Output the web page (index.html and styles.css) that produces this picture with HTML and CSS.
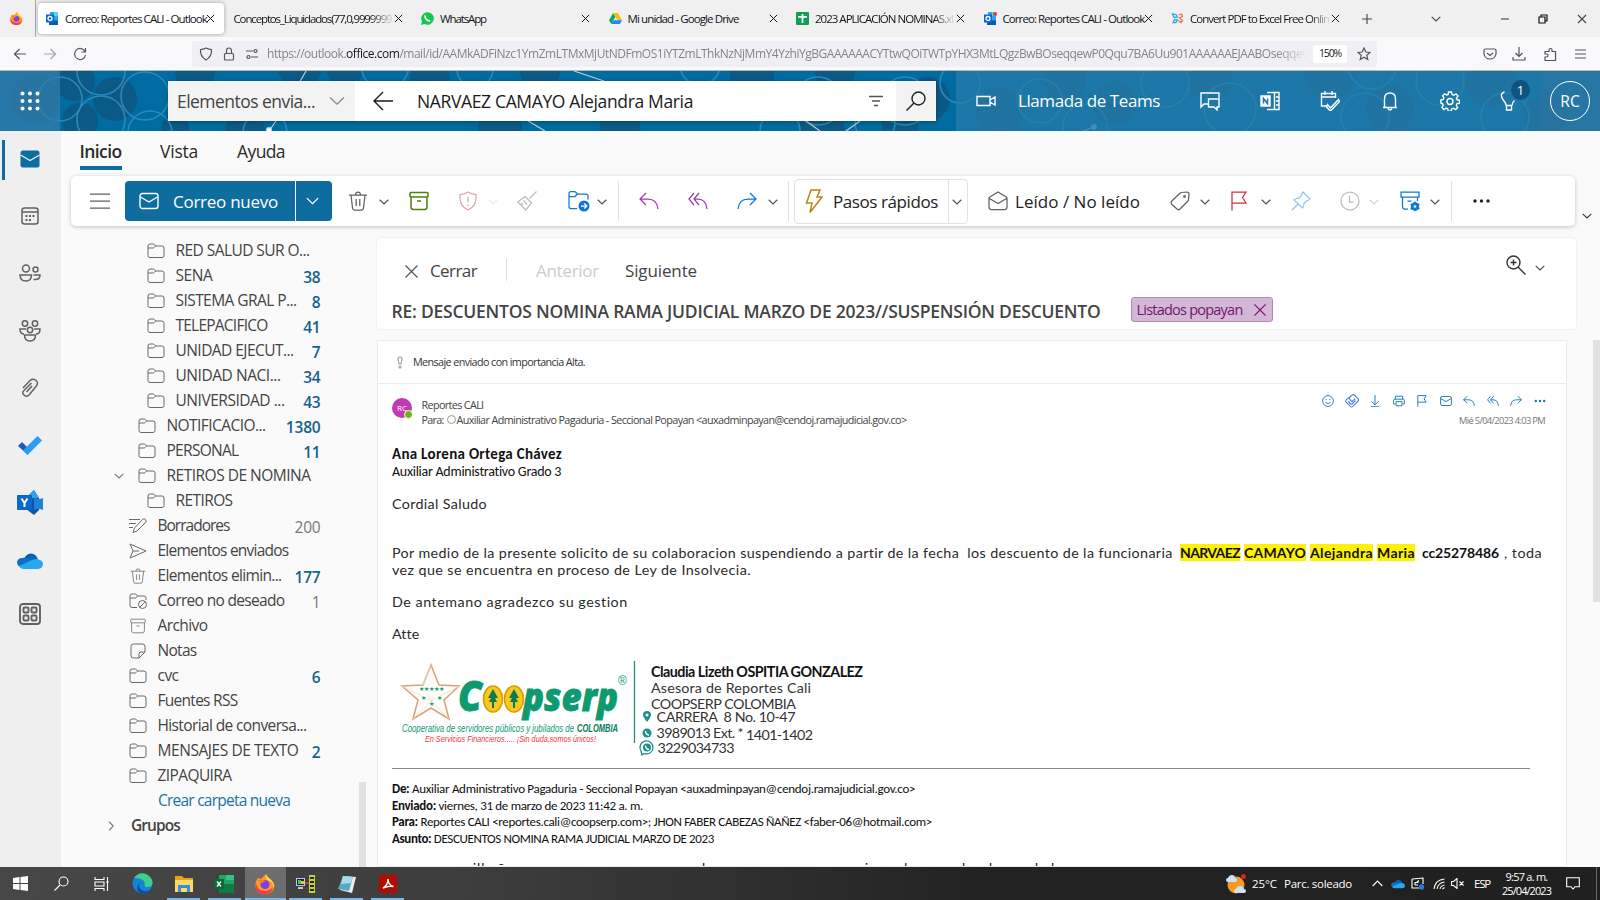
FILE: index.html
```html
<!DOCTYPE html>
<html lang="es">
<head>
<meta charset="utf-8">
<title>Correo: Reportes CALI - Outlook</title>
<link rel="stylesheet" href="styles.css">
</head>
<body>
<svg class="defs" width="0" height="0">
  <symbol id="x" viewBox="0 0 10 10"><path d="M1 1l8 8M9 1l-8 8"/></symbol>
  <symbol id="down" viewBox="0 0 10 6"><path d="M.7.8L5 5 9.300.8"/></symbol>
  <symbol id="folder" viewBox="0 0 18 16"><path d="M1 12.500V3Q1 1 3 1h3.200q.8 0 1.300.6L8.700 3H15q2 0 2 2v7.500q0 2-2 2H3q-2 0-2-2zM1 5h5q.8 0 1.300-.6L8.700 3"/></symbol>
  <symbol id="trash" viewBox="0 0 20 20"><path d="M1 4h18M7.500 4Q7.500 1 10 1t2.500 3M3 4l1.500 13q.2 2 2 2h7q1.800 0 2-2L17 4M8.200 8v7M11.800 8v7"/></symbol>
  <symbol id="archive" viewBox="0 0 20 20"><path d="M2 1.500h16q1 0 1 1V5q0 1-1 1H2q-1 0-1-1V2.500q0-1 1-1zM2 6v10q0 2.500 2.500 2.500h11Q18 18.500 18 16V6M8 10h4"/></symbol>
  <symbol id="reply" viewBox="0 0 20 20"><path d="M7 2L1 8l6 6M1 8h8q9 0 10 10"/></symbol>
  <symbol id="replyall" viewBox="0 0 20 20"><path d="M6 2L1 8l5 6M11 2L6 8l5 6M6 8h4q8 0 9 10"/></symbol>
  <symbol id="mail" viewBox="0 0 20 18"><rect x="1" y="1.500" width="18" height="15" rx="2.500"/><path d="M1.500 5L10 10l8.500-5"/></symbol>
  <symbol id="flag" viewBox="0 0 18 20"><path d="M2 19.500V1h14l-3.500 5.500L16 12H2"/></symbol>
  <symbol id="cloud" viewBox="0 0 26 16"><path fill="#0364b8" stroke="none" d="M7 7Q8 1 14 .5q5 .2 7 6L14 12z"/><path fill="#1070c8" stroke="none" d="M5 5q5-1 8 2l8 7H4q-4-1-4-5 1-4 5-4z"/><path fill="#28a8ea" stroke="none" d="M2 13L15 7q4-2 7-.3 4 .8 4 4.800-.5 4-5 4.500H6q-3-.5-4-3z"/></symbol>
  <symbol id="outlook" viewBox="0 0 13 13"><path fill="#28a8ea" stroke="none" d="M4 0h8v12H4z"/><path fill="#50d9ff" stroke="none" d="M8 0h4v4H8z"/><path fill="#0f5ba8" stroke="none" d="M3 8l9 .500V13H3z"/><path fill="#0a68c8" stroke="none" d="M0 2.500h8v8H0z"/><circle cx="4" cy="6.500" r="2" stroke="#fff" stroke-width="1.300"/></symbol>
  <symbol id="fox" viewBox="0 0 20 20"><path fill="#ff9a1f" stroke="none" d="M3 4l3 1q3-3 5-5 1 3 4 5 5 4 4 9-2 6-9 6-8 0-9.500-7Q0 7 3 4z"/><path fill="#ffde3a" stroke="none" d="M11 0q1 3 4 5 5 4 4 9-1-6-5-7-4-2-3-7z"/><path fill="#f6384d" stroke="none" d="M1 9q1 8 9 8 5 0 8-4-1 7-8 7-8 0-9.500-7z"/><circle cx="10" cy="10.500" r="4.500" fill="#7b3ff2" stroke="none"/><path fill="#ff7a22" stroke="none" d="M3 6q4-1 8 1-3 .5-3 2-2 0-3-1z"/></symbol>
  <symbol id="drive" viewBox="0 0 14 12"><path fill="#0da960" stroke="none" d="M4.500 0L0 8l2.300 4L7 4z"/><path fill="#fbbc04" stroke="none" d="M4.500 0h5L14 8H9.300z"/><path fill="#2684fc" stroke="none" d="M2.300 12L4.700 8H14l-2.300 4z"/></symbol>
</svg>

<div class="tabs">
  <div class="pin"><svg class="i13"><use href="#fox"/></svg></div>
  <div class="tab on"><svg class="i13"><use href="#outlook"/></svg><span data-fit="142">Correo: Reportes CALI - Outlook</span><svg class="cl"><use href="#x"/></svg></div>
  <div class="tab bare fade"><span data-fit="158">Conceptos_Liquidados(77,0,9999999</span><svg class="cl"><use href="#x"/></svg></div>
  <div class="tab"><svg class="i13" viewBox="0 0 13 13"><path fill="#12c84c" stroke="none" d="M0 13l1-3.500A6.300 6.300 0 1 1 3.500 12z"/><path d="M4 3.500q0 5 5.300 5.500" stroke="#fff" stroke-width="1.800"/></svg><span data-fit="46">WhatsApp</span><svg class="cl"><use href="#x"/></svg></div>
  <div class="tab"><svg class="i13"><use href="#drive"/></svg><span data-fit="111">Mi unidad - Google Drive</span><svg class="cl"><use href="#x"/></svg></div>
  <div class="tab fade"><svg class="i13" viewBox="0 0 13 13"><rect width="13" height="13" rx="1" fill="#0f9d58" stroke="none"/><path d="M6.500 2v9M2 4.800h9" stroke="#fff" stroke-width="1.800"/></svg><span data-fit="138">2023 APLICACIÓN NOMINAS.xl</span><svg class="cl"><use href="#x"/></svg></div>
  <div class="tab"><svg class="i13" viewBox="0 0 13 13"><use href="#outlook"/><circle cx="11" cy="2" r="2" fill="#e23b3b" stroke="none"/></svg><span data-fit="142">Correo: Reportes CALI - Outlook</span><svg class="cl"><use href="#x"/></svg></div>
  <div class="tab fade"><svg class="i13" viewBox="0 0 13 13"><path d="M1.500 2l3.500.5L6.500 5 3 5.500zM2 10.500l1.500-3 3 .5-1.500 2.500z" stroke="#35a8ea" stroke-width="1.300"/><path d="M7.500 3l3-1 1 2.500-3 1.500 3 2.500-1.500 2-2.500-2" stroke="#f2703a" stroke-width="1.300"/></svg><span data-fit="139">Convert PDF to Excel Free Onlin</span><svg class="cl"><use href="#x"/></svg></div>
  <div class="win">
    <svg class="i10" viewBox="0 0 10 10"><path d="M5 0v10M0 5h10"/></svg>
    <svg class="chev"><use href="#down"/></svg>
    <svg class="i10" viewBox="0 0 10 10"><path d="M1 5h8"/></svg>
    <svg class="i10" viewBox="0 0 10 10"><path d="M1 3h6v6H1zM3 3V1h6v6H7" stroke="#111" stroke-width="1.200"/></svg>
    <svg class="i10"><use href="#x"/></svg>
  </div>
</div>

<div class="nav">
  <svg class="i14" viewBox="0 0 14 14"><path d="M13 7H1.500M6.500 2l-5 5 5 5"/></svg>
  <svg class="i14 dim" viewBox="0 0 14 14"><path d="M1 7h11.500M7.500 2l5 5-5 5"/></svg>
  <svg class="i14" viewBox="0 0 14 14"><path d="M12 4.500A5.500 5.500 0 1 0 12.500 8M12.500 1v4H8.500"/></svg>
  <div class="url">
    <svg class="i14" viewBox="0 0 14 14"><path d="M7 1q3 1.500 5.500 1.500Q13 9.500 7 13 1 9.500 1.500 2.500 4 2.500 7 1z"/></svg>
    <svg class="i14" viewBox="0 0 14 14"><rect x="2.500" y="6.500" width="9" height="6.500" rx="1"/><path d="M4.500 6.500V4q0-3 2.500-3t2.500 3v2.500"/></svg>
    <svg class="i14" viewBox="0 0 14 14"><path d="M1 4h7M6 10h7"/><circle cx="10.500" cy="4" r="1.500"/><circle cx="3.500" cy="10" r="1.500"/></svg>
    <div class="addr"><span data-fit="1044">https://outlook.<b>office.com</b>/mail/id/AAMkADFiNzc1YmZmLTMxMjUtNDFmOS1iYTZmLThkNzNjMmY4YzhiYgBGAAAAAACYTtwQOiTWTpYHX3MtLQgzBwBOseqqewP0Qqu7BA6Uu901AAAAAAEJAABOseqqew</span></div>
    <div class="zoom"><span data-fit="22">150%</span></div>
    <svg class="i14" viewBox="0 0 14 14"><path d="M7 1l1.800 4 4.200.4-3.200 2.900 1 4.200L7 10.300l-3.800 2.200 1-4.200L1 5.400 5.200 5z"/></svg>
  </div>
  <svg class="i14" viewBox="0 0 14 14"><path d="M2.500 2h9q1.500 0 1.500 1.500V7q-1 5-6 5T1 7V3.500Q1 2 2.500 2zM4 6l3 2.500L10 6"/></svg>
  <svg class="i14" viewBox="0 0 14 14"><path d="M7 0v9M3.500 6L7 9.500 10.500 6M1 10v3h12v-3"/></svg>
  <svg class="i14" viewBox="0 0 14 14"><path d="M2 13.500V10h1.500q1.500 0 1.500-1.500T3.500 7H2V4.500h4V3q0-1.500 1.500-1.500T9 3v1.500h3.500v9z"/></svg>
  <svg class="i14" viewBox="0 0 14 14"><path d="M2 3h11M2 7h11M2 11h11"/></svg>
</div>

<header class="top">
  <svg class="pattern" width="1600" height="60" viewBox="0 0 1600 60">
    <g fill="#0b5a85" stroke="none">
      <circle cx="35" cy="28" r="24"/><circle cx="75" cy="10" r="20"/><circle cx="115" cy="28" r="22"/><circle cx="80" cy="50" r="18"/><circle cx="175" cy="57" r="14"/><circle cx="195" cy="0" r="20"/><circle cx="300" cy="-4" r="22"/><circle cx="245" cy="60" r="20"/><circle cx="345" cy="-2" r="18"/><circle cx="430" cy="8" r="20"/><circle cx="500" cy="56" r="22"/><circle cx="540" cy="0" r="20"/><circle cx="620" cy="55" r="20"/><circle cx="752" cy="5" r="22"/><circle cx="835" cy="0" r="20"/><circle cx="822" cy="56" r="22"/><circle cx="900" cy="54" r="18"/><circle cx="928" cy="28" r="22"/><circle cx="1000" cy="40" r="24"/><circle cx="1065" cy="8" r="22"/><circle cx="1115" cy="32" r="22"/><circle cx="1210" cy="8" r="22"/><circle cx="1330" cy="2" r="26"/><circle cx="1390" cy="38" r="24"/><circle cx="1490" cy="10" r="26"/><circle cx="1545" cy="45" r="22"/>
    </g>
    <g stroke="#2c88ba" stroke-width="1.600">
      <circle cx="60" cy="28" r="22"/><circle cx="101" cy="0" r="24"/><circle cx="101" cy="49" r="24"/><circle cx="145" cy="25" r="24"/><circle cx="150" cy="62" r="22"/><circle cx="265" cy="62" r="22"/><circle cx="385" cy="-6" r="24"/><circle cx="475" cy="-2" r="18"/><circle cx="700" cy="-6" r="20"/><circle cx="780" cy="60" r="20"/><circle cx="818" cy="30" r="24"/><circle cx="875" cy="52" r="20"/><circle cx="905" cy="30" r="24"/><circle cx="960" cy="12" r="20"/><circle cx="1040" cy="30" r="22"/><circle cx="1085" cy="55" r="22"/><circle cx="1165" cy="12" r="24"/><circle cx="1230" cy="38" r="26"/><circle cx="1372" cy="-6" r="24"/><circle cx="1365" cy="46" r="24"/><circle cx="1440" cy="10" r="24"/><circle cx="1505" cy="46" r="24"/>
    </g>
    <g stroke="#b8cdd8" stroke-width="1.200"><path d="M306 0l-8 14M276 50l-7 10M574 0l30 10M525 48l20 12M806 50l14 10M860 50l-14 10M1093 56l-14 6"/><circle cx="269" cy="59" r="2.500" fill="#fff"/><circle cx="1094" cy="56" r="3" fill="#8fbcd2" stroke="none"/></g>
  </svg>
  <div class="bar">
    <svg class="i20" viewBox="0 0 20 20"><g fill="#fff" stroke="none"><circle cx="2.500" cy="2.500" r="2"/><circle cx="10" cy="2.500" r="2"/><circle cx="17.500" cy="2.500" r="2"/><circle cx="2.500" cy="10" r="2"/><circle cx="10" cy="10" r="2"/><circle cx="17.500" cy="10" r="2"/><circle cx="2.500" cy="17.500" r="2"/><circle cx="10" cy="17.500" r="2"/><circle cx="17.500" cy="17.500" r="2"/></g></svg>
    <div class="search">
      <div class="scope"><span data-fit="138">Elementos envia...</span><svg class="bigchev"><use href="#down"/></svg></div>
      <div class="query"><svg class="i20" viewBox="0 0 20 20"><path d="M20 10H1.500M10 1l-9 9 9 9"/></svg><span data-fit="276">NARVAEZ CAMAYO Alejandra Maria</span></div>
      <svg class="filter" viewBox="0 0 14 12"><path d="M0 1.500h14M3 6h8M5 10.500h4"/></svg>
      <div class="go"><svg class="i20" viewBox="0 0 20 20"><circle cx="12.500" cy="7.500" r="6.500"/><path d="M8 12L.5 19.500"/></svg></div>
    </div>
    <svg class="i20" viewBox="0 0 20 20"><path d="M1 5.500h13v9H1zM14 9l5-3v8l-5-3"/></svg>
    <span class="call" data-fit="142">Llamada de Teams</span>
    <svg class="i20" viewBox="0 0 20 20"><path d="M8 13H4l-3 3V2h18v5M8.500 8H19v8h-2v3l-3-3H8.500z"/></svg>
    <svg class="i20" viewBox="0 0 20 20"><path d="M7 1.500h12v17H7M14.500 2v16M16 6h3M16 10h3M16 14h3"/><path fill="#fff" d="M1 5h9v10H1z"/><path d="M3.500 12.500v-5l4 5v-5" stroke="#1d76a8" stroke-width="1.500"/></svg>
    <svg class="i20" viewBox="0 0 20 20"><path d="M7 15H1.500V2.500h14V7M1.500 6h14M5 0v4M12 0v4M7.500 13.500l3 3.500 8-8.500 1 2-9 9.500-4-4z"/></svg>
    <svg class="i20" viewBox="0 0 20 20"><path d="M3 16.500h14M4.500 16V8q0-6 5.500-6t5.500 6v8M8 17.500q2 3 4 0"/></svg>
    <svg class="i20" viewBox="0 0 20 20"><path d="M8.500 1h3l.6 2.600 1.700.7L16 2.800 18 5l-1.500 2.200.7 1.600 2.300.4v3l-2.500.5-.7 1.600 1.300 2.300-2 2-2.200-1.400-1.700.7-.5 2.200h-3l-.5-2.300-1.600-.7-2.200 1.400-2-2 1.300-2.200-.7-1.700L.8 12V9l2.400-.5.7-1.700-1.300-2 2-2L6.800 4l1.300-.5z"/><circle cx="10" cy="10.500" r="3"/></svg>
    <div class="tips"><svg class="i20" viewBox="0 0 20 20"><path d="M7 14.500Q7 12 5 10-.5 3 5.500.8M13 14.500q0-3 2.500-5M7 14.500h6M7.500 14.500V19h5v-4.500"/></svg><i>1</i></div>
    <div class="me"><span>RC</span></div>
  </div>
</header>

<div class="app">
  <aside class="rail">
    <svg class="i20 cur" viewBox="0 0 20 18"><rect x=".5" y=".5" width="19" height="17" rx="2.500" fill="#0f6c9f" stroke="none"/><path d="M.5 5L10 10.500 19.500 5" stroke="#efefef" stroke-width="1.300"/></svg>
    <svg class="i18" viewBox="0 0 18 18"><rect x="1" y="1" width="16" height="16" rx="2.500"/><path d="M1 5h16"/><path d="M4.500 9h2M8 9h2M11.500 9h2M4.500 13h2M8 13h2" stroke-width="2"/></svg>
    <svg class="i22" viewBox="0 0 22 18"><circle cx="7" cy="4.500" r="3.500"/><circle cx="16.500" cy="5.500" r="2.500"/><path d="M1 11h11.500q0 6-5.700 6T1 11zM14.500 11H21q0 4.500-4.500 4.500h-2"/></svg>
    <svg class="i22" viewBox="0 0 22 22"><circle cx="6" cy="3.500" r="2.700"/><circle cx="16" cy="3.500" r="2.700"/><circle cx="11" cy="10" r="2.700"/><path d="M7 9H1q0 5 4 5M15 9h6q0 5-4 5M5.500 15h11q0 6-5.500 6t-5.500-6z"/></svg>
    <svg class="i18 clip" viewBox="0 0 18 20"><path d="M2 10l7-7.500q3-2.500 6 0t0 6L8 17q-2.500 2.500-5 0t0-4.500l7.500-7.500"/><path d="M11 8l-5.500 6"/></svg>
    <svg class="i24" viewBox="0 0 24 19"><path fill="#185abd" stroke="none" d="M0 10l4-4 6 6v7z"/><path fill="#2f9bf0" stroke="none" d="M5 14.500L19.500 0 24 4.500 9.500 19z"/></svg>
    <svg class="i26" viewBox="0 0 26 26"><path fill="#0f56a8" stroke="none" d="M17 0l5 8v12l-5 5-8-6V8z"/><path fill="#2ba2ec" stroke="none" d="M17 0l5 8H9z"/><path fill="#1b84da" stroke="none" d="M17 8q5 2 9 0v12q-4-2-9 0z"/><rect y="5" width="15" height="15" rx="1" fill="#0a68c8" stroke="none"/><path d="M4.500 8.500l3 4.500 3-4.500M7.500 13v4" stroke="#fff" stroke-width="2"/></svg>
    <svg class="i26c"><use href="#cloud"/></svg>
    <svg class="i22 apps" viewBox="0 0 22 22"><rect x="1" y="1" width="20" height="20" rx="3"/><rect x="4.500" y="4.500" width="5" height="5" rx="1"/><rect x="12.500" y="4.500" width="5" height="5" rx="1"/><rect x="4.500" y="12.500" width="5" height="5" rx="1"/><rect x="12.500" y="12.500" width="5" height="5" rx="1"/></svg>
  </aside>

  <div class="work">
    <div class="menu"><b data-fit="42">Inicio</b><span data-fit="38">Vista</span><span data-fit="48">Ayuda</span></div>
    <div class="ribbonrow">
    <div class="ribbon">
      <svg class="i20" viewBox="0 0 20 20"><path d="M0 3h20M0 10h20M0 17h20"/></svg>
      <div class="new"><div><svg class="i20"><use href="#mail"/></svg><span data-fit="105">Correo nuevo</span></div><div><svg class="chev13"><use href="#down"/></svg></div></div>
      <svg class="i20"><use href="#trash"/></svg><svg class="chev"><use href="#down"/></svg>
      <svg class="i20 green"><use href="#archive"/></svg>
      <svg class="i20 pink" viewBox="0 0 20 20"><path d="M10 1q4 2.500 8 2.500Q19 15 10 19 1 15 2 3.500 6 3.500 10 1zM10 6v5.500M10 13.500v1.500"/></svg><svg class="chev off faint"><use href="#down"/></svg>
      <svg class="i20 grey" viewBox="0 0 20 20"><path d="M19.500.5l-7 7M8 5.500l6.500 6.500M8 5.500L.8 11l8 8L14.500 12zM4 12l2 2M6.500 9.500l3.500 4"/></svg>
      <svg class="i22 blue" viewBox="0 0 22 21"><path d="M9 18H3q-2 0-2-2V3q0-2 2-2h4l2.500 2.500H18q2 0 2 2V9M1 6h6l2.500-2.500"/><circle cx="16" cy="15.500" r="5.500" fill="#0f78d4" stroke="none"/><path d="M13 15.500h5.500M16.300 13l2.500 2.500-2.500 2.500" stroke="#fff"/></svg><svg class="chev"><use href="#down"/></svg>
      <i class="sep"></i>
      <svg class="i20 purple"><use href="#reply"/></svg>
      <svg class="i20 purple"><use href="#replyall"/></svg>
      <svg class="i20 blue flip"><use href="#reply"/></svg><svg class="chev"><use href="#down"/></svg>
      <i class="sep"></i>
      <div class="quick"><div><svg class="bolt" viewBox="0 0 18 24"><path d="M6 1h9l-3 7h5L5 23.500 7 14H1.500z"/></svg><span data-fit="105">Pasos rápidos</span></div><div><svg class="chev"><use href="#down"/></svg></div></div>
      <svg class="i20" viewBox="0 0 20 20"><path d="M1 7.500q0-1 .8-1.500L10 1l8.200 5q.8.500.8 1.500V16q0 2.500-2.500 2.500h-13Q1 18.500 1 16zM1.500 7.500L10 12.500l8.500-5"/></svg>
      <span data-fit="125">Leído / No leído</span>
      <svg class="i20" viewBox="0 0 20 20"><path d="M11.500 1.500L17 1q2 0 2 2l-.5 5.500q0 1-.8 1.800L10 18q-1.500 1.500-3 0l-5.500-5q-1-1.500.3-3L10 2.200q.7-.7 1.500-.7z"/><circle cx="14.500" cy="5.500" r=".8"/></svg><svg class="chev"><use href="#down"/></svg>
      <svg class="i20 red"><use href="#flag"/></svg><svg class="chev"><use href="#down"/></svg>
      <svg class="i20 sky" viewBox="0 0 20 20"><path d="M12 1l7 7q-1 1.500-3 1.500l-3 3q0 3-1.500 4.500L3 9q2-2 4.500-1.500l3-3Q11 2 12 1zM7 13.200L.8 19.300"/></svg>
      <svg class="i20 grey" viewBox="0 0 20 20"><circle cx="10" cy="10" r="9"/><path d="M9.500 5v6h4"/></svg><svg class="chev off"><use href="#down"/></svg>
      <svg class="i20 blue" viewBox="0 0 20 20"><path d="M1 1h18v5H1zM2.500 6v9.500q0 2.500 2.500 2.500h3M17.500 6v4M7.500 10h4"/><circle cx="15" cy="15.500" r="3" stroke-width="2.500"/><path d="M15 10.500v10M10.700 13l8.600 5M10.700 18l8.600-5" stroke-width="1.600"/><circle cx="15" cy="15.500" r="1.300" fill="#fff" stroke="none"/></svg><svg class="chev"><use href="#down"/></svg>
      <i class="sep"></i>
      <svg class="dots" viewBox="0 0 17 4"><g fill="#222" stroke="none"><circle cx="2" cy="2" r="1.700"/><circle cx="8.500" cy="2" r="1.700"/><circle cx="15" cy="2" r="1.700"/></g></svg>
    </div>
    <svg class="chev more"><use href="#down"/></svg>
    </div>

    <div class="panes">
      <nav class="folders">
        <ul>
          <li class="l3"><svg class="fo"><use href="#folder"/></svg><span data-fit="134">RED SALUD SUR O...</span></li>
          <li class="l3"><svg class="fo"><use href="#folder"/></svg><span data-fit="37">SENA</span><b>38</b></li>
          <li class="l3"><svg class="fo"><use href="#folder"/></svg><span data-fit="121">SISTEMA GRAL P...</span><b>8</b></li>
          <li class="l3"><svg class="fo"><use href="#folder"/></svg><span data-fit="92">TELEPACIFICO</span><b>41</b></li>
          <li class="l3"><svg class="fo"><use href="#folder"/></svg><span data-fit="118">UNIDAD EJECUT...</span><b>7</b></li>
          <li class="l3"><svg class="fo"><use href="#folder"/></svg><span data-fit="105">UNIDAD NACI...</span><b>34</b></li>
          <li class="l3"><svg class="fo"><use href="#folder"/></svg><span data-fit="109">UNIVERSIDAD ...</span><b>43</b></li>
          <li class="l2"><svg class="fo"><use href="#folder"/></svg><span data-fit="99">NOTIFICACIO...</span><b>1380</b></li>
          <li class="l2"><svg class="fo"><use href="#folder"/></svg><span data-fit="72">PERSONAL</span><b>11</b></li>
          <li class="l2 open"><svg class="chev"><use href="#down"/></svg><svg class="fo"><use href="#folder"/></svg><span data-fit="144">RETIROS DE NOMINA</span></li>
          <li class="l3"><svg class="fo"><use href="#folder"/></svg><span data-fit="57">RETIROS</span></li>
          <li class="l1"><svg class="fo" viewBox="0 0 18 16"><path d="M0 1.500h11M0 5.500h7M0 9.500h4M13.500 1.500q1.500-1.500 3 0t0 3L8 13l-4 1.500L5.500 10z"/></svg><span data-fit="72">Borradores</span><em>200</em></li>
          <li class="l1"><svg class="fo" viewBox="0 0 18 16"><path d="M1 1l16 7L1 15l3-7zM4 8h6"/></svg><span data-fit="131">Elementos enviados</span></li>
          <li class="l1"><svg class="fo"><use href="#trash"/></svg><span data-fit="124">Elementos elimin...</span><b>177</b></li>
          <li class="l1"><svg class="fo" viewBox="0 0 18 16"><path d="M8 14.500H3q-2 0-2-2V3Q1 1 3 1h3.500L8.700 3H15q2 0 2 2v2M1 5h5.500L8.700 3"/><circle cx="13.500" cy="11.500" r="4"/><path d="M10.800 14.200l5.400-5.400"/></svg><span data-fit="127">Correo no deseado</span><em>1</em></li>
          <li class="l1"><svg class="fo"><use href="#archive"/></svg><span data-fit="50">Archivo</span></li>
          <li class="l1"><svg class="fo" viewBox="0 0 18 16"><path d="M10 15H4.500Q2 15 2 12.500v-9Q2 1 4.500 1h9Q16 1 16 3.500V9zM10 15v-4q0-2 2-2h4"/></svg><span data-fit="39">Notas</span></li>
          <li class="l1"><svg class="fo"><use href="#folder"/></svg><span data-fit="21">cvc</span><b>6</b></li>
          <li class="l1"><svg class="fo"><use href="#folder"/></svg><span data-fit="80">Fuentes RSS</span></li>
          <li class="l1"><svg class="fo"><use href="#folder"/></svg><span data-fit="149">Historial de conversa...</span></li>
          <li class="l1"><svg class="fo"><use href="#folder"/></svg><span data-fit="141">MENSAJES DE TEXTO</span><b>2</b></li>
          <li class="l1"><svg class="fo"><use href="#folder"/></svg><span data-fit="74">ZIPAQUIRA</span></li>
          <li class="link"><span data-fit="132">Crear carpeta nueva</span></li>
          <li class="groups"><svg class="chevr" viewBox="0 0 6 10"><path d="M1 .7L5.200 5 1 9.300"/></svg><strong data-fit="49">Grupos</strong></li>
        </ul>
        <i class="thumb"></i>
      </nav>

      <main>
        <section class="subject">
          <div class="acts">
            <svg class="i15" viewBox="0 0 10 10"><use href="#x"/></svg><span data-fit="47">Cerrar</span><i></i><span class="off" data-fit="63">Anterior</span><span data-fit="72">Siguiente</span>
            <svg class="i20 mag" viewBox="0 0 20 20"><circle cx="7.500" cy="7.500" r="6.500"/><path d="M12 12l7.500 7.500M4.500 7.500h6M7.500 4.500v6"/></svg><svg class="chev"><use href="#down"/></svg>
          </div>
          <div class="subj"><h1 data-fit="709">RE: DESCUENTOS NOMINA RAMA JUDICIAL MARZO DE 2023//SUSPENSIÓN DESCUENTO</h1><div class="chip"><span data-fit="106">Listados popayan</span><svg class="i14"><use href="#x"/></svg></div></div>
        </section>
        <div class="scroll">
        <article>
          <div class="imp"><svg width="8" height="13" viewBox="0 0 8 13"><path d="M4 1q2 0 2 2L5 8H3L2 3q0-2 2-2z"/><circle cx="4" cy="11" r="1"/></svg><span data-fit="172">Mensaje enviado con importancia Alta.</span></div>
          <div class="from">
            <div class="av">RC<i></i></div>
            <div class="who"><p><span data-fit="62">Reportes CALI</span></p><p><span data-fit="22">Para:</span><i></i><span data-fit="450">Auxiliar Administrativo Pagaduria - Seccional Popayan &lt;auxadminpayan@cendoj.ramajudicial.gov.co&gt;</span></p></div>
            <div class="tools">
              <div>
                <svg viewBox="0 0 20 20"><circle cx="10" cy="10" r="9"/><path d="M5.500 12q4.500 5 9 0M7 6.500v2M13 6.500v2"/></svg>
                <svg class="vio" viewBox="0 0 20 20"><path d="M10 1.500q2-1.500 4 .5l4.500 4.500q2 2 0 4l-7 7q-2 2-4 0L2 12q-2-2 0-4zM6 5l3-2.500M6.500 4.500q-1 2 1 4l2.500 2.500 4.500-4.500M5 10q2 5 5 4.500l5-5"/></svg>
                <svg viewBox="0 0 20 20"><path d="M10 0v16M4 10.500l6 6 6-6M3 19.500h14"/></svg>
                <svg viewBox="0 0 20 20"><path d="M4 7V2h12v5M4 15H1V9q0-2 2-2h14q2 0 2 2v6h-3M5 11h10v7H5z"/></svg>
                <svg><use href="#flag"/></svg>
                <svg><use href="#mail"/></svg>
                <svg><use href="#reply"/></svg>
                <svg><use href="#replyall"/></svg>
                <svg class="flip"><use href="#reply"/></svg>
                <svg viewBox="0 0 20 20"><g fill="#1473a8" stroke="none"><circle cx="3" cy="10" r="2"/><circle cx="10" cy="10" r="2"/><circle cx="17" cy="10" r="2"/></g></svg>
              </div>
              <time data-fit="86">Mié 5/04/2023 4:03 PM</time>
            </div>
          </div>
          <div class="body">
            <p class="cal name"><b data-fit="170">Ana Lorena Ortega Chávez</b></p>
            <p class="cal"><span data-fit="169">Auxiliar Administrativo Grado 3</span></p>
            <p class="cg gap14"><span data-fit="95">Cordial Saludo</span></p>
            <p class="cg gap31 marks"><span data-fit="781">Por medio de la presente solicito de su colaboracion suspendiendo a partir de la fecha&nbsp; los descuento de la funcionaria</span><mark data-fit="60">NARVAEZ</mark><mark data-fit="62">CAMAYO</mark><mark data-fit="63">Alejandra</mark><mark data-fit="38">Maria</mark><b data-fit="77">cc25278486</b><span data-fit="38">, toda</span></p>
            <p class="cg"><span data-fit="359">vez que se encuentra en proceso de Ley de Insolvecia.</span></p>
            <p class="cg gap15"><span data-fit="236">De antemano agradezco su gestion</span></p>
            <p class="cg gap15"><span data-fit="27">Atte</span></p>
            <svg class="sign" width="480" height="104" viewBox="392 655 480 104">
              <path d="M431 665l8 20 20 1-15 14 5 19-18-11-18 11 5-19-16-14 21-1z" fill="#fffdfa" stroke="#d6a57c" stroke-width="1.600"/>
              <path d="M431 665l-8 20 8 16 18 18M402 686l29 15 28-15M413 719l18-18" stroke="#f0dfd0" stroke-width=".8"/>
              <g fill="#0c9a77" stroke="none" font-size="6"><text x="418.500" y="691" textLength="25">★★★★★</text><text x="421" y="700">★</text><text x="437" y="700">★</text><text x="429" y="706">★</text></g>
              <g class="logo"><text x="458" y="711" font-size="43" textLength="24" lengthAdjust="spacingAndGlyphs">C</text><text x="523" y="711" font-size="39" textLength="95" lengthAdjust="spacingAndGlyphs">pserp</text></g>
              <g stroke="#d79b00" stroke-width="1.500" fill="#f7c81e"><ellipse cx="493" cy="699" rx="9.500" ry="13"/><ellipse cx="514" cy="699" rx="9.500" ry="13"/></g>
              <g fill="#0c7a4f" stroke="none"><path d="M493 689l5 9h-3l2 4h-3v6h-2v-6h-3l2-4h-3zM514 689l5 9h-3l2 4h-3v6h-2v-6h-3l2-4h-3z"/></g>
              <text class="reg" x="618" y="685">®</text>
              <g class="cond"><text x="402" y="732" fill="#0c9a77" font-size="11.500" textLength="172" lengthAdjust="spacingAndGlyphs">Cooperativa de servidores públicos y jubilados de</text><text x="577" y="732" fill="#08795c" font-weight="bold" font-size="11.500" textLength="41" lengthAdjust="spacingAndGlyphs">COLOMBIA</text><text x="425" y="742" fill="#f2383a" font-size="9.500" textLength="171" lengthAdjust="spacingAndGlyphs">En Servicios Financieros..... ¡Sin duda,somos únicos!</text></g>
              <path d="M634.500 661v82" stroke="#1d8f7c" stroke-width="1.300"/>
              <g class="ct">
                <text x="651" y="676.500" font-weight="bold" fill="#111" textLength="212">Claudia Lizeth OSPITIA GONZALEZ</text>
                <text x="651" y="692.500" textLength="160">Asesora de Reportes Cali</text>
                <text x="651" y="709" textLength="145">COOPSERP COLOMBIA</text>
                <text x="656.500" y="722" textLength="139">CARRERA&#160; 8 No. 10-47</text>
                <text x="656.500" y="738" textLength="87">3989013 Ext. *</text><text x="746" y="740" textLength="67">1401-1402</text>
                <text x="657.500" y="752.500" textLength="77">3229034733</text>
              </g>
              <path d="M647 722q-4-5-4-7 0-4 4-4t4 4q0 2-4 7z" fill="#1d8f8a" stroke="none"/><circle cx="647" cy="715" r="1.500" fill="#fff" stroke="none"/>
              <circle cx="647" cy="733" r="4.500" fill="#1d8f8a" stroke="none"/><path d="M645.500 731q0 3.500 3.500 4" stroke="#fff" stroke-width="1.500"/>
              <path d="M642 755l-1-4a6.500 6.500 0 1 1 3 2.500z" fill="#fff" stroke="#1d8f8a" stroke-width="1.300"/><circle cx="647" cy="747.500" r="4" fill="#1d8f8a" stroke="none"/><path d="M645.500 745.500q0 3.500 3.500 4" stroke="#fff" stroke-width="1.300"/>
            </svg>
            <hr>
            <div class="quoted">
              <p><span data-fit="523"><b>De:</b> Auxiliar Administrativo Pagaduria - Seccional Popayan &lt;auxadminpayan@cendoj.ramajudicial.gov.co&gt;</span></p>
              <p><span data-fit="251"><b>Enviado:</b> viernes, 31 de marzo de 2023 11:42 a. m.</span></p>
              <p><span data-fit="540"><b>Para:</b> Reportes CALI &lt;reportes.cali@coopserp.com&gt;; JHON FABER CABEZAS ÑAÑEZ &lt;faber-06@hotmail.com&gt;</span></p>
              <p><span data-fit="322"><b>Asunto:</b> DESCUENTOS NOMINA RAMA JUDICIAL MARZO DE 2023</span></p>
            </div>
            <p class="cal cut"><span data-fit="690">carmencillo ñoarceros ram acces no sumo el en caso verano como asi son de enero los demas de las areas</span></p>
          </div>
        </article>
        <i class="thumb2"></i>
        </div>
      </main>
    </div>
  </div>
</div>

<footer class="task">
  <div class="apps10">
    <div><svg width="15" height="15" viewBox="0 0 15 15"><path fill="#fff" stroke="none" d="M0 2l6.500-1v6H0zM7.500.9L15 0v7H7.500zM0 8h6.500v6L0 13zM7.500 8H15v7l-7.500-1z"/></svg></div>
    <div><svg width="15" height="15" viewBox="0 0 15 15"><circle cx="9.500" cy="5.500" r="4.500"/><path d="M6 9L.5 14.500"/></svg></div>
    <div><svg width="15" height="14" viewBox="0 0 15 14"><path d="M1 0v2.500h9V0M1 5h9v4H1zM1 14v-2.500h9V14M13.500 0v14M12 5h3"/></svg></div>
    <div><svg width="21" height="21" viewBox="0 0 21 21"><circle cx="10.500" cy="10.500" r="10" fill="#1583d8" stroke="none"/><path fill="#3ccf8d" stroke="none" d="M2 5q5-7 13-3.500 6 3.500 5.500 9-1 4-6 3.500-3-.5-1.500-3.500Q12 5 2 5z"/><path fill="#0b4f9e" stroke="none" d="M8 9q-3 7 4 9 4 1 7-2-4 6-11 4-6-4 0-11z"/></svg></div>
    <div class="run"><svg width="18" height="16" viewBox="0 0 18 16"><path fill="#e8a21c" stroke="none" d="M0 0h7l2 2h9v5H0z"/><path fill="#ffd869" stroke="none" d="M0 4h18v12H0z"/><path fill="#3a8fdc" stroke="none" d="M3 9h12v7h-3v-4H6v4H3z"/></svg></div>
    <div class="run"><svg width="20" height="18" viewBox="0 0 20 18"><path fill="#21a366" stroke="none" d="M5 0h15v9H5z"/><path fill="#107c41" stroke="none" d="M5 9h15v9H5z"/><path fill="#33c481" stroke="none" d="M12 0h8v5h-8z"/><path fill="#0e6b38" stroke="none" d="M0 4h10v10H0z"/><path d="M3 6.500l4 5M7 6.500l-4 5" stroke="#fff" stroke-width="1.300"/></svg></div>
    <div class="run act"><svg width="20" height="20"><use href="#fox"/></svg></div>
    <div class="run"><svg width="20" height="18" viewBox="0 0 20 18"><path fill="#c9c9c9" stroke="none" d="M0 3h9v8H0zM2 12h5v2H2z"/><path fill="#131a7a" stroke="none" d="M1 4h7v6H1z"/><path fill="#39d24a" stroke="none" d="M2 5h3v4H2z"/><path fill="#e6c92c" stroke="none" d="M5 6h3v3H5z"/><path d="M9 8h4" stroke="#e33" stroke-width="1.500"/><path fill="#c8d42b" stroke="none" d="M13 0h6v18h-6z"/><path d="M14 3h4M14 7h4M14 11h4M14 15h4" stroke="#222" stroke-width="1.800"/></svg></div>
    <div class="run"><svg width="18" height="18" viewBox="0 0 18 18"><path fill="#e8eef2" stroke="none" d="M5 1l13 1-4 16-12-3z"/><path fill="#5aa9c4" stroke="none" d="M5 1l10 1-4 14-11-2z"/><path fill="#a7dbe8" stroke="none" d="M5 1l10 1-2 6-10 1z"/></svg></div>
    <div class="run"><svg width="18" height="18" viewBox="0 0 18 18"><rect width="18" height="18" rx="3" fill="#b30b00" stroke="none"/><path d="M4 13q5-3 5-9 0 6 5.500 7.500Q9 10.500 4 13z" stroke="#fff" stroke-width="1.400"/></svg></div>
  </div>
  <div class="tray">
    <svg width="20" height="20" viewBox="0 0 20 20"><circle cx="10" cy="11" r="8.500" fill="#f79a1e" stroke="none"/><circle cx="17.500" cy="2.500" r="2.500" fill="#d3261c" stroke="none"/><path fill="#cfe0fa" stroke="none" d="M2 8q-2 0-2-2t2-2q1-3 4-3t3 3q2 0 2 2t-2 2zM11 19q-3 0-3-2t2-2q1-3 4-3t4 3q2 0 2 2t-2 2z"/></svg>
    <span data-fit="25">25°C</span><span data-fit="68">Parc. soleado</span>
    <svg width="11" height="7" viewBox="0 0 11 7"><path d="M.7 6L5.500 1l4.800 5"/></svg>
    <svg width="14" height="10" ><use href="#cloud"/></svg>
    <svg width="14" height="13" viewBox="0 0 14 13"><path d="M1 2l11-1v6M1 2v9h7M4 8V5.500h3.500M4 8h3M6 5l2-1.500"/><circle cx="10.500" cy="10" r="2.700" fill="#2f7bd6" stroke="none"/></svg>
    <svg width="12" height="12" viewBox="0 0 12 12"><path d="M1 11Q2 2 11.500 1M4 11q1-6 7.500-7M7 11q.5-3 4.500-4M9.500 11l2-1.500"/></svg>
    <svg width="13" height="11" viewBox="0 0 13 11"><path d="M.6 3.500v4h2L6 10.500V.5L2.600 3.500zM8.500 3.500l4 4M12.500 3.500l-4 4"/></svg>
    <span data-fit="16">ESP</span>
    <div class="clock"><span data-fit="42">9:57 a. m.</span><span data-fit="49">25/04/2023</span></div>
    <svg width="14" height="13" viewBox="0 0 14 13"><path d="M.7.700h12.600v9H9L7 12 5 9.700H.7z"/></svg>
    <i></i>
  </div>
</footer>
<script src="fit.js"></script>
</body>
</html>
```

FILE: styles.css
```css
* { box-sizing: border-box; }
body { margin: 0; width: 1600px; height: 900px; overflow: hidden; background: #fafafa; color: #333; font: 16px/1.2 "Segoe UI", "Open Sans", sans-serif; font-stretch: 93%; display: flex; flex-direction: column; }
p, h1, ul { margin: 0; padding: 0; list-style: none; }
i, em { font-style: normal; }
svg { display: block; flex: none; fill: none; stroke: currentColor; stroke-width: 1.1; }
.defs { position: absolute; }
[data-fit] { display: block; flex: none; white-space: nowrap; }
.i10 { width: 10px; height: 10px; }
.i13 { width: 13px; height: 13px; }
.i14 { width: 14px; height: 14px; stroke-width: 1.2; }
.i15 { width: 15px; height: 15px; }
.i18 { width: 18px; height: 18px; }
.i20 { width: 20px; height: 20px; }
.i22 { width: 22px; height: 22px; }
.i24 { width: 24px; height: 19px; }
.i26 { width: 26px; height: 26px; }
.i26c { width: 26px; height: 16px; }
.chev { width: 10px; height: 6px; }
.chev13 { width: 13px; height: 8px; }
.flip { transform: scaleX(-1); }

/* browser chrome */
.tabs { height: 37px; background: #f0f0f0; display: flex; align-items: center; font-size: 11.5px; color: #15141a; }
.pin { width: 36px; height: 37px; border-right: 1px solid #aaa; padding-left: 10px; display: flex; align-items: center; margin-right: 2px; }
.tab { width: 187.5px; height: 31px; display: grid; grid-template-columns: 19px 141px 9px; align-items: center; padding-left: 8px; border-radius: 4px; flex: none; }
.tab.on { background: #fff; box-shadow: 0 0 4px rgba(0,0,0,.35); width: 186px; margin-right: 1.5px; }
.tab.bare { grid-template-columns: 160px 9px; }
.tab .cl { width: 9px; height: 9px; }
.fade span { mask-image: linear-gradient(90deg, #000 86%, transparent 102%); }
.win { padding-left: 11px; display: grid; grid-template-columns: 69px 69px 38px 39px 10px; align-items: center; color: #444; }
.nav { height: 34px; background: #f9f9fb; border-bottom: 1px solid #b9b9bb; padding-left: 13px; display: grid; grid-template-columns: 30px 30px 119px 1291px 29px 31px 30px 14px; align-items: center; color: #55545c; }
.dim { opacity: .5; }
.url { width: 1185px; height: 26px; background: #f0f0f4; border-radius: 3px; padding-left: 7px; display: grid; grid-template-columns: 23px 23px 22px 1046px 44px 14px; align-items: center; }
.addr { width: 1040px; overflow: hidden; font-size: 12px; padding-top: 1px; color: #85848c; mask-image: linear-gradient(90deg, #000 97%, transparent); }
.addr b { font-weight: 400; color: #15141a; }
.zoom { width: 34px; height: 18px; background: #fff; border-radius: 2px; font-size: 10.5px; color: #222; display: grid; place-items: center; }

/* outlook header */
.top { height: 60px; background: #006ba0; position: relative; flex: none; color: #fff; }
.pattern { position: absolute; left: 0; top: 0; }
.bar { position: relative; height: 60px; padding-left: 20px; display: grid; grid-template-columns: 148px 808px 42px 182px 60px 60px 60px 60px 59px 51px 40px; align-items: center; background: linear-gradient(90deg, rgba(50,125,170,.75) 60px, transparent 60px 956px, rgba(37,124,170,.75) 956px 1540px, rgba(45,120,165,.85) 1540px); }
.bar svg { stroke-width: 1.4; }
.call { font-size: 17px; padding-top: 1px; }
.search { width: 768px; height: 40px; background: #fff; display: grid; grid-template-columns: 187px 514px 27px 40px; align-items: center; color: #222; border-radius: 0 2px 2px 0; box-shadow: 0 1px 4px rgba(0,0,0,.3); }
.search span { padding-top: 1px; }
.scope { height: 40px; background: #f3f3f3; padding-left: 9px; display: flex; align-items: center; gap: 14px; font-size: 17.5px; color: #444; }
.bigchev { width: 16px; height: 10px; color: #888; }
.scope .bigchev { stroke-width: .8; }
.query { display: flex; align-items: center; gap: 24px; padding-left: 18px; font-size: 17.5px; color: #1a1a1a; }
.filter { width: 14px; height: 12px; color: #555; }
.go { height: 40px; background: #f3f3f3; display: grid; place-items: center; }
.tips { position: relative; }
.tips i { position: absolute; left: 12px; top: -11px; width: 19px; height: 20px; border-radius: 50%; background: #0d5580; font-size: 13px; line-height: 20px; text-align: center; }
.me { width: 40px; height: 40px; border: 1px solid #fff; border-radius: 50%; display: grid; place-items: center; font-size: 15.5px; }

/* app frame */
.app { display: flex; height: 736px; overflow: hidden; flex: none; }
.rail { width: 61px; padding-right: 2px; background: linear-gradient(#0f6c9f, #0f6c9f) 2px 9px / 3px 40px no-repeat, #efefef; display: grid; grid-template-rows: 56px 57.5px 57.5px 57px 57px 58px 58px 57px 50px; justify-items: center; align-items: center; color: #616161; flex: none; }
.rail svg { stroke-width: 1.5; }
.rail .clip { height: 20px; }
.rail .apps { stroke-width: 1.9; }
.rail .cur { height: 18px; }
.work { flex: 1; min-width: 0; }
.menu { height: 45px; padding: 9px 0 0 18.5px; display: flex; font-size: 17.5px; line-height: 23px; color: #2b2b2b; }
.menu > * { height: 30px; }
.menu b { font-weight: 600; border-bottom: 4px solid #0f6c9f; margin-right: 38.5px; }
.menu span { margin-right: 39px; }
.ribbonrow { display: flex; align-items: flex-start; padding-left: 10px; }
.ribbon { width: 1504px; height: 50px; background: #fff; border-radius: 5px; box-shadow: 0 1px 4px rgba(0,0,0,.22); padding-left: 19px; display: grid; grid-template-columns: 35px 223px 31px 30px 49px 30px 29px 51px 29px 21px 21px 49px 49px 31px 20px 6px 194px 27px 155px 30px 29px 32px 30px 49px 29px 31px 30px 21px 22px 20px; align-items: center; color: #616161; font-size: 17px; }
.ribbon svg { stroke-width: 1.25; }
.ribbon .chev { color: #555; margin-top: 2px; }
.ribbon span { padding-top: 2px; }
.ribbon > span, .quick span { color: #222; }
.more { margin: 37px 0 0 7px; color: #333; }
.new { width: 207px; height: 40px; background: #0f6c9f; border-radius: 4px; color: #fff; display: grid; grid-template-columns: 170px 37px; }
.new > div { display: flex; align-items: center; gap: 14px; padding-left: 14px; }
.new > div + div { border-left: 1px solid #fff; padding-left: 10px; }
.new svg { stroke-width: 1.4; }
.new .chev13 { stroke-width: 1; }
.ribbon .green { color: #498205; stroke-width: 1.5; }
.pink { color: #e3a5a9; }
.grey { color: #bdbdbd; }
.ribbon .off { color: #d5d5d5; }
.ribbon .faint { color: #ededed; }
.blue { color: #0f78d4; }
.purple { color: #9b3fae; }
.red { color: #c4393f; }
.sky { color: #93c4ee; }
.sep { width: 1px; height: 40px; background: #e1e1e1; }
.quick { width: 174px; height: 45px; border: 1px solid #e3e3e3; border-radius: 4px; display: grid; grid-template-columns: 153px 19px; }
.quick > div { display: flex; align-items: center; gap: 10px; padding-left: 10px; }
.quick > div + div { border-left: 1px solid #e3e3e3; padding-left: 3px; }
.quick .bolt { width: 18px; height: 24px; color: #b58818; stroke-width: 1.5; }
.dots { width: 17px; height: 4px; }

/* folders */
.panes { display: flex; height: 641px; }
.folders { width: 316px; position: relative; padding-top: 12px; flex: none; }
.folders li { height: 25px; display: flex; align-items: center; width: 259.5px; color: #444; font-size: 15.5px; gap: 10.5px; }
.folders .fo { width: 18px; height: 16px; color: #6a6a6a; stroke-width: 1; }
.folders .l3 { padding-left: 86px; }
.folders .l2 { padding-left: 77px; }
.folders .l1 { padding-left: 68px; }
.folders .open { padding-left: 53px; gap: 0; }
.open .chev { margin-right: 14px; color: #777; }
.open .fo { margin-right: 10.5px; }
.folders li b, .folders li em { margin-left: auto; padding-top: 3px; letter-spacing: -.2px; }
.folders li b { color: #17618e; font-weight: 600; }
.folders li em { color: #777; }
.folders .link { padding-left: 97px; color: #1873a8; }
.folders .groups { padding-left: 47px; gap: 17px; }
.chevr { width: 6px; height: 10px; color: #777; }
.groups strong { font-weight: 600; }
.thumb { position: absolute; left: 298px; top: 556px; width: 7px; height: 85px; background: #e1e1e1; }

/* reading pane */
main { width: 1223px; padding-top: 12px; }
.subject { width: 1199px; height: 91px; background: #fff; border-radius: 4px; box-shadow: 0 0 2px rgba(0,0,0,.12); color: #444; }
.acts { height: 56px; display: flex; align-items: center; font-size: 17px; padding: 10px 0 0 27px; }
.acts > :nth-child(2) { margin-left: 11px; }
.acts i { width: 1px; height: 23px; background: #e1e1e1; margin: -4px 29px 0; }
.acts .off { color: #ccc; margin-right: 26px; }
.acts .mag { margin-left: 809px; margin-top: -13px; color: #333; stroke-width: 1.4; }
.acts .mag + .chev { margin: -7px 0 0 9px; }
.acts .i15 { stroke-width: .8; color: #555; }
.subj { display: flex; align-items: center; padding-left: 14.5px; height: 33px; }
.subj h1 { font-size: 17.5px; font-weight: 600; margin-right: 30px; padding-top: 1px; }
.chip { width: 142px; height: 25px; margin-top: -2px; border: 1px solid #b686bb; border-radius: 3px; background: #d2b8d5; color: #75146f; font-size: 14.5px; display: flex; align-items: center; padding-left: 5px; gap: 10px; }
.chip svg { stroke-width: .9; }
.scroll { display: flex; justify-content: space-between; padding-top: 11px; }
article { width: 1190px; height: 527px; background: #fff; border: 1px solid #ececec; overflow: hidden; }
.thumb2 { width: 7px; height: 262px; background: #e1e1e1; }
.imp { height: 43px; border-bottom: 1px solid #ececec; display: flex; align-items: center; padding-left: 18px; gap: 9px; font-size: 10.8px; }
.imp svg { color: #999; }
.from { height: 52px; display: flex; padding: 12px 0 0 14px; }
.av { position: relative; width: 20px; height: 20px; border-radius: 50%; background: #c239b3; color: #fff; font-size: 8px; line-height: 20px; text-align: center; margin-top: 2px; }
.av i { position: absolute; left: 12px; top: 12px; width: 9px; height: 9px; border-radius: 50%; background: #6bb700; border: 1px solid #fff; }
.who { font-size: 10.8px; line-height: 15px; padding-left: 9.5px; color: #444; margin-top: .5px; }
.who p { display: flex; align-items: center; }
.who i { width: 9px; height: 9px; border: 1px solid #999; border-radius: 50%; margin: 0 1px 0 3px; }
.tools { margin: -5px 0 0 415.5px; }
.tools div { display: grid; grid-template-columns: repeat(10, 23.500px); height: 20px; align-items: center; color: #1473a8; }
.tools svg { width: 12px; height: 12px; stroke-width: 1.5; }
.tools .vio { width: 14px; height: 14px; color: #4a72e0; margin-left: -1px; }
.tools time { font-size: 9.300px; line-height: 19px; color: #777; margin-left: 137px; }
.body { padding: 9px 0 0 14px; color: #111; }
.cal { font: 14px/18px Calibri, Carlito, Lato, sans-serif; }
.name { font-size: 15px; }
.cg { font: 14.300px/17px "Century Gothic", Lato, sans-serif; color: #2a2a2a; }
.gap14 { margin-top: 14px; }
.gap31 { margin-top: 32px; }
.gap15 { margin-top: 15px; }
.marks { display: flex; gap: 4px; white-space: nowrap; }
.marks > :first-child { margin-right: 3px; }
.marks b { margin: 0 1px 0 3px; color: #111; }
.marks b, .marks mark { font-size: 14px; }
.marks mark { background: #fff200; color: #111; font-weight: 700; }
.sign { margin-top: 13px; }
.logo { font-family: "Open Sans", sans-serif; font-weight: 800; font-style: italic; fill: #0c9a6e; stroke: #0c9a6e; stroke-width: .8; }
.reg { font: 12px "Liberation Sans", sans-serif; fill: #0c9a77; stroke: none; }
.cond { font-family: "Liberation Sans", sans-serif; font-style: italic; stroke: none; }
.ct { font-family: "Century Gothic", Lato, sans-serif; font-size: 14.300px; fill: #333; stroke: none; }
.body hr { width: 1138px; height: 1px; border: 0; background: #888; margin: 9px 0 12px; }
.quoted { font: 13px/16.700px Calibri, Carlito, Lato, sans-serif; }
.cut { margin: 12px 0 0 26px; }

/* taskbar */
.task { height: 33px; background: linear-gradient(90deg, #474747, #3d3d3d 30%, #222 62%, #202020); display: flex; justify-content: space-between; color: #fff; flex: none; }
.apps10 { display: flex; }
.apps10 > div { width: 40.800px; height: 33px; display: grid; place-items: center; }
.run { background: linear-gradient(#76b9ed, #76b9ed) 50% 100% / 33px 2px no-repeat; }
.run.act { background: linear-gradient(#76b9ed, #76b9ed) 0 100% / 100% 2px no-repeat, #6d6d6d; }
.tray { width: 374px; display: grid; grid-template-columns: 26px 32px 88px 19px 20px 22px 18px 23px 28px 64px 30px 4px; align-items: center; font-size: 11.500px; }
.tray i { width: 1px; height: 33px; background: #666; }
.clock { display: grid; width: 49px; justify-items: center; line-height: 14px; font-size: 11px; }
```

FILE: fit.js
```js
// Tracks each label so that it fills the width its slot reserves.
document.querySelectorAll('[data-fit]').forEach(function (el) {
  var range = document.createRange();
  range.selectNodeContents(el);
  var natural = range.getBoundingClientRect().width;
  var target = Number(el.dataset.fit);
  el.style.letterSpacing = (target - natural) / el.textContent.length + 'px';
  el.style.width = target + 'px';
});
```
